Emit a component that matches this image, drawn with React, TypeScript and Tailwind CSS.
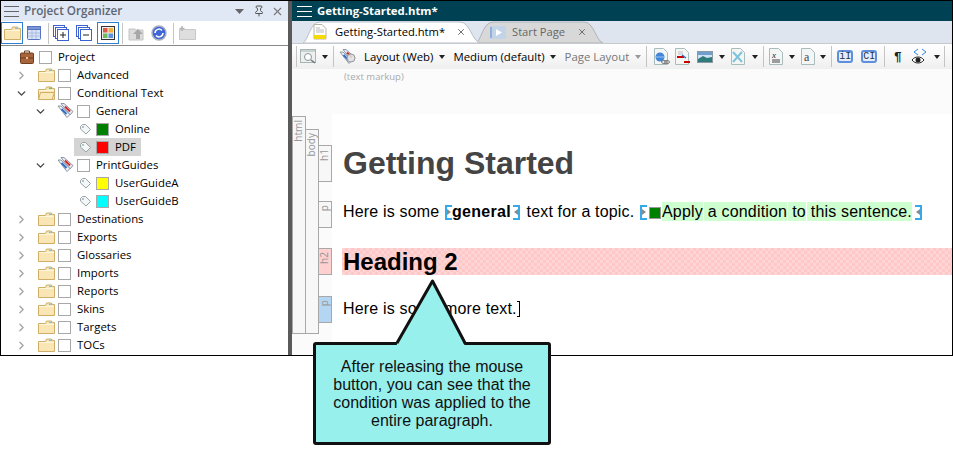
import { ChevronDown, ChevronRight, Pin, X } from 'lucide-react';
import type { ReactNode } from 'react';

const uiFont = 'font-["Open_Sans","Liberation_Sans",sans-serif]';

const Caret = ({ muted }: { muted?: boolean }) => (
  <svg width="6" height="4" viewBox="0 0 6 4" className="shrink-0">
    <path d="M0 0h6L3 4z" fill={muted ? '#999' : '#222'} />
  </svg>
);

const Sep = () => <div className="mx-[5px] h-[21px] w-px shrink-0 bg-[#c4c4c4]" />;

const Folder = ({ open }: { open?: boolean }) => (
  <svg width="17" height="14" viewBox="0 0 17 14" className="shrink-0">
    <path d="M.5 3.500h7l1-2.500h5l1 1.500h2v11H.5z" fill="#f9e6b4" stroke="#cfae68" />
    <path d="M1 4.500h15" stroke="#fff6dc" />
    {open ? <path d="M.5 13.500l2-7h14l-2.500 7z" fill="#fbe9ba" stroke="#cfae68" /> : null}
    <path d="M11 1.500h3v1.500h-3z" fill={open ? '#6cc070' : '#7fc4e0'} />
  </svg>
);

const TagGroup = ({ lens }: { lens?: boolean }) => (
  <svg width="17" height="16" viewBox="0 0 17 16" className="shrink-0">
    <path d="M4 .5h3l9 8-3 3.500z" fill="#e8ecf2" stroke="#8c96a8" />
    <path d="M8 3.500l5 5" stroke="#d22c2c" strokeWidth="2" />
    <path d="M1 3h3l9 8.500-3 3z" fill="#eef1f5" stroke="#8c96a8" />
    <path d="M4.500 6l5 5" stroke="#2f6fc6" strokeWidth="2" />
    {lens ? <circle cx="12" cy="9" r="4" fill="#e6e6e6" fillOpacity=".85" stroke="#9a9a9a" /> : null}
  </svg>
);

const Tag = () => (
  <svg width="11" height="11" viewBox="0 0 11 11" className="shrink-0">
    <path d="M.5 2.500l2-2h3l5 5-4.500 4.500-5.500-5z" fill="#f4f7f8" stroke="#97a3a6" />
    <circle cx="3" cy="3" r=".9" fill="#97a3a6" />
  </svg>
);

const Check = ({ color }: { color?: string }) => (
  <span
    className="h-[13px] w-[13px] shrink-0 border border-[#a8a8a8] bg-white"
    style={color ? { backgroundColor: color } : undefined}
  />
);

type Row = {
  label: string;
  kind: 'project' | 'folder' | 'group' | 'tag';
  arrow?: 'open' | 'closed';
  open?: boolean;
  color?: string;
  selected?: boolean;
};

const rows: Row[] = [
  { label: 'Project', kind: 'project' },
  { label: 'Advanced', kind: 'folder', arrow: 'closed' },
  { label: 'Conditional Text', kind: 'folder', arrow: 'open', open: true },
  { label: 'General', kind: 'group', arrow: 'open' },
  { label: 'Online', kind: 'tag', color: '#008000' },
  { label: 'PDF', kind: 'tag', color: '#ff0000', selected: true },
  { label: 'PrintGuides', kind: 'group', arrow: 'open' },
  { label: 'UserGuideA', kind: 'tag', color: '#ffff00' },
  { label: 'UserGuideB', kind: 'tag', color: '#00ffff' },
  { label: 'Destinations', kind: 'folder', arrow: 'closed' },
  { label: 'Exports', kind: 'folder', arrow: 'closed' },
  { label: 'Glossaries', kind: 'folder', arrow: 'closed' },
  { label: 'Imports', kind: 'folder', arrow: 'closed' },
  { label: 'Reports', kind: 'folder', arrow: 'closed' },
  { label: 'Skins', kind: 'folder', arrow: 'closed' },
  { label: 'Targets', kind: 'folder', arrow: 'closed' },
  { label: 'TOCs', kind: 'folder', arrow: 'closed' },
];

const TreeRow = ({ row }: { row: Row }) => (
  <div className="flex h-[18px] items-center">
    {row.kind === 'project' ? (
      <div className="ml-[19px] mr-[5px] flex items-center">
        <svg width="14" height="14" viewBox="0 0 14 14">
          <path d="M4.500 3V1h5v2" fill="none" stroke="#6e3f20" />
          <rect x=".5" y="3" width="13" height="10.500" rx="1" fill="#a8643a" stroke="#6e3f20" />
          <path d="M1 8h12" stroke="#6e3f20" />
          <path d="M6 7h2v2H6z" fill="#e8c68c" />
        </svg>
      </div>
    ) : null}
    {row.kind === 'folder' ? (
      <div className="ml-[14px] flex items-center">
        <div className="flex w-[23px] items-center">
          {row.arrow === 'open' ? (
            <ChevronDown size={13} strokeWidth={2.5} className="text-[#444]" />
          ) : (
            <ChevronRight size={13} strokeWidth={2.5} className="text-[#a6a6a6]" />
          )}
        </div>
        <Folder open={row.open} />
        <div className="w-[3px]" />
      </div>
    ) : null}
    {row.kind === 'group' ? (
      <div className="ml-[33px] flex items-center">
        <div className="w-[23px]">
          <ChevronDown size={13} strokeWidth={2.5} className="text-[#444]" />
        </div>
        <TagGroup />
        <div className="w-[3px]" />
      </div>
    ) : null}
    {row.kind === 'tag' ? (
      <div
        className={
          row.selected
            ? 'ml-[73px] flex h-[18px] items-center bg-[#d4d4d4] pl-[6px] pr-[5px]'
            : 'ml-[73px] flex h-[18px] items-center pl-[6px] pr-[5px]'
        }
      >
        <Tag />
        <div className="w-[5px]" />
        <Check color={row.color} />
        <span className="ml-[6px] text-[11.400px] leading-none text-black">{row.label}</span>
      </div>
    ) : (
      <>
        <Check />
        <span className="ml-[6px] text-[11.400px] leading-none text-black">{row.label}</span>
      </>
    )}
  </div>
);

const ToolBtn = ({ active, children }: { active?: boolean; children: ReactNode }) => (
  <div
    className={
      active
        ? 'flex h-[22px] w-[22px] shrink-0 items-center justify-center border border-[#2f7fd6]'
        : 'flex h-[22px] w-[22px] shrink-0 items-center justify-center border border-transparent'
    }
  >
    {children}
  </div>
);

const Stack = ({ sign }: { sign: string }) => (
  <svg width="16" height="16" viewBox="0 0 16 16">
    <rect x=".5" y=".5" width="11" height="11" fill="#fff" stroke="#3b62d0" />
    <rect x="2.500" y="2.500" width="11" height="11" fill="#fff" stroke="#3b62d0" />
    <rect x="4.500" y="4.500" width="11" height="11" fill="#fff" stroke="#3b62d0" />
    <path d={sign === '+' ? 'M7 10h6M10 7v6' : 'M7 10h6'} stroke="#222" />
  </svg>
);

const Organizer = () => (
  <div className={`flex h-full w-[287px] shrink-0 flex-col ${uiFont}`}>
    <div className="flex h-[20px] items-center bg-[#dfe8f4] pl-[3px] pr-[4px]">
      <div className="flex w-[15px] flex-col gap-[4px]">
        <div className="h-px bg-[#666]" />
        <div className="h-px bg-[#666]" />
        <div className="h-px bg-[#666]" />
      </div>
      <span className="ml-[5px] flex-1 text-[11.700px] font-semibold leading-none text-[#5f6570]">
        Project Organizer
      </span>
      <svg width="9" height="5" viewBox="0 0 9 5" className="mr-[9px]">
        <path d="M0 0h9L4.500 5z" fill="#666" />
      </svg>
      <Pin size={12} className="mr-[6px] text-[#555]" />
      <X size={13} className="text-[#777]" />
    </div>
    <div className="flex h-[25px] items-center border-b border-[#888] bg-white">
      <ToolBtn active>
        <Folder />
      </ToolBtn>
      <ToolBtn>
        <svg width="14" height="14" viewBox="0 0 14 14">
          <rect x=".5" y=".5" width="13" height="13" rx="1" fill="#dbe4f5" stroke="#5673c8" />
          <rect x=".5" y=".5" width="13" height="3" fill="#7b97d4" stroke="#5673c8" />
          <path d="M1 7h12M1 10h12M5 4v9M9 4v9" stroke="#a9bce0" />
        </svg>
      </ToolBtn>
      <div className="ml-[3px] mr-[1px] h-[21px] w-px shrink-0 bg-[#c4c4c4]" />
      <ToolBtn>
        <Stack sign="+" />
      </ToolBtn>
      <div className="w-px" />
      <ToolBtn>
        <Stack sign="-" />
      </ToolBtn>
      <div className="w-[2px]" />
      <ToolBtn active>
        <svg width="14" height="14" viewBox="0 0 14 14">
          <rect x=".5" y=".5" width="13" height="13" fill="#eee" stroke="#333" />
          <rect x="2" y="2" width="4.500" height="4.500" fill="#e0574f" />
          <rect x="7.500" y="2" width="4.500" height="4.500" fill="#f0b03a" />
          <rect x="2" y="7.500" width="4.500" height="4.500" fill="#6dbb5e" />
          <rect x="7.500" y="7.500" width="4.500" height="4.500" fill="#5b93dc" />
        </svg>
      </ToolBtn>
      <div className="ml-[3px] mr-[2px] h-[21px] w-px shrink-0 bg-[#c4c4c4]" />
      <ToolBtn>
        <svg width="17" height="15" viewBox="0 0 17 15">
          <path d="M1 3h6l1 1h7v10H1z" fill="#dcdcdc" stroke="#c4c4c4" />
          <path d="M10 3l5 5h-3v5H8V8H5z" fill="#a8a8a8" />
        </svg>
      </ToolBtn>
      <div className="w-px" />
      <ToolBtn>
        <svg width="16" height="16" viewBox="0 0 16 16">
          <circle cx="8" cy="8" r="7" fill="#3f66d6" stroke="#a9b0bf" strokeWidth="1.500" />
          <path d="M4 8a4 4 0 0 1 7-2.500M12 8a4 4 0 0 1-7 2.500" fill="none" stroke="#fff" strokeWidth="1.500" />
        </svg>
      </ToolBtn>
      <div className="ml-[3px] mr-[2px] h-[21px] w-px shrink-0 bg-[#c4c4c4]" />
      <ToolBtn>
        <svg width="17" height="14" viewBox="0 0 17 14">
          <path d="M.5 3.500h16v10H.5z" fill="#dedede" stroke="#c8c8c8" />
          <path d="M3 0v5M.5 2.500h5" stroke="#b5b5b5" strokeWidth="1.500" />
        </svg>
      </ToolBtn>
    </div>
    <div className="flex-1 overflow-hidden bg-white pt-[2px]">
      {rows.map((row) => (
        <TreeRow key={row.label} row={row} />
      ))}
    </div>
  </div>
);

const Tab = ({ active, children }: { active?: boolean; children: ReactNode }) => (
  <div className={active ? 'relative z-10 h-[22px] w-[179px]' : 'relative -ml-[6px] h-[22px] w-[129px]'}>
    <svg width="100%" height="22" viewBox={active ? '0 0 179 22' : '0 0 129 22'} className="absolute inset-0">
      {active ? (
        <path d="M1 22C6 20 8 1 18 1H158C168 1 170 20 178 22z" fill="#fff" stroke="#b9bfc9" />
      ) : (
        <path d="M1 22C6 20 8 1 18 1H109C119 1 121 20 128 22z" fill="#d8d8d8" stroke="#aeb3bb" />
      )}
    </svg>
    <div className="absolute inset-0 flex items-center">{children}</div>
  </div>
);

const Page = ({ children }: { children: ReactNode }) => (
  <svg width="16" height="17" viewBox="0 0 16 17" className="shrink-0">
    <path d="M.5.500h9l4 4v12H.5z" fill="#f4f6f6" stroke="#a9bcbc" />
    {children}
  </svg>
);

const Toolbar = () => (
  <div className={`flex h-[26px] items-center whitespace-nowrap border-t border-[#c6c9cd] bg-gradient-to-b from-white to-[#efefef] pl-[4px] text-[11.400px] text-black ${uiFont}`}>
    <div className="mr-[3px] h-[21px] w-px shrink-0 bg-[#c4c4c4]" />
    <svg width="17" height="15" viewBox="0 0 17 15" className="shrink-0">
      <rect x=".5" y=".5" width="15" height="13" fill="#eef0f0" stroke="#a9b5b5" />
      <path d="M1 1h14v2H1z" fill="#c9d2d2" />
      <circle cx="8" cy="8" r="3.500" fill="#fff" stroke="#8a9494" />
      <path d="M11 11l4 3" stroke="#6a7474" strokeWidth="1.500" />
    </svg>
    <div className="ml-[5px]"><Caret /></div>
    <Sep />
    <TagGroup lens />
    <span className="ml-[8px] leading-none">Layout (Web)</span>
    <div className="ml-[6px]"><Caret /></div>
    <span className="ml-[8px] leading-none">Medium (default)</span>
    <div className="ml-[5px]"><Caret /></div>
    <span className="ml-[9px] leading-none text-[#777]">Page Layout</span>
    <div className="ml-[6px]"><Caret muted /></div>
    <Sep />
    <div className="ml-[2px] flex items-center">
      <Page>
        <circle cx="6" cy="9" r="4.500" fill="#3f86d8" />
        <path d="M1.500 9h9" stroke="#9cc8f0" />
        <ellipse cx="10" cy="14" rx="2.500" ry="1.500" fill="none" stroke="#777" />
        <ellipse cx="13" cy="14" rx="2.500" ry="1.500" fill="none" stroke="#777" />
      </Page>
    </div>
    <div className="ml-[5px] flex items-center">
      <Page>
        <path d="M2 9h7" stroke="#c00" strokeWidth="2" />
        <path d="M9 14h6" stroke="#c00" strokeWidth="2" />
        <path d="M3 4h5M3 6h5" stroke="#bbb" />
        <path d="M7 7l4 3" stroke="#2f6fc6" strokeWidth="1.500" />
      </Page>
    </div>
    <svg width="16" height="12" viewBox="0 0 16 12" className="ml-[6px] shrink-0">
      <rect x=".5" y=".5" width="15" height="11" fill="#cfe4f2" stroke="#8a9aa0" />
      <path d="M1 8l5-3 4 2 5-1v5H1z" fill="#2f7a7a" />
      <path d="M1 1h14v3H1z" fill="#6f9fd0" />
    </svg>
    <div className="ml-[6px]"><Caret /></div>
    <div className="ml-[6px] flex items-center">
      <Page>
        <path d="M2 4l9 10M11 4l-9 10" stroke="#7cc4dc" strokeWidth="2" />
      </Page>
    </div>
    <div className="ml-[5px]"><Caret /></div>
    <Sep />
    <div className="flex items-center">
      <Page>
        <text x="3" y="10" fontSize="9" fontFamily="Liberation Serif, serif" fontStyle="italic" fill="#222">x</text>
        <path d="M3 12h8M3 14h8" stroke="#444" />
      </Page>
    </div>
    <div className="ml-[4px]"><Caret /></div>
    <div className="ml-[6px] flex items-center">
      <Page>
        <text x="3" y="13" fontSize="12" fontFamily="Liberation Serif, serif" fill="#444">a</text>
      </Page>
    </div>
    <div className="ml-[3px]"><Caret /></div>
    <Sep />
    <div className="flex h-[13px] w-[16px] shrink-0 items-center justify-center rounded-[3px] border-2 border-[#5d8fdc] bg-[#e3edfb] font-['Liberation_Mono',monospace] text-[10px] leading-none text-[#234]">iI</div>
    <div className="ml-[8px] flex h-[13px] w-[16px] shrink-0 items-center justify-center rounded-[3px] border-2 border-[#5d8fdc] bg-[#e3edfb] font-['Liberation_Mono',monospace] text-[10px] leading-none text-[#234]">CI</div>
    <div className="ml-[7px] mr-[9px] h-[21px] w-px shrink-0 bg-[#c4c4c4]" />
    <span className="w-[8px] font-['Liberation_Sans',sans-serif] text-[13px] font-bold leading-none text-[#222]">¶</span>
    <svg width="18" height="18" viewBox="0 0 18 18" className="ml-[9px] shrink-0">
      <path d="M7 7L3 4l4-3M11 1l4 3-4 3" fill="none" stroke="#2f88e0" />
      <path d="M1 12c3-4 9-4 12 0-3 4-9 4-12 0z" fill="#fff" stroke="#222" />
      <circle cx="7" cy="12" r="2.500" fill="#222" />
    </svg>
    <div className="ml-[5px]"><Caret /></div>
    <div className="ml-[4px] h-[21px] w-px shrink-0 bg-[#c4c4c4]" />
  </div>
);

const Bracket = ({ side, ml, mr }: { side: 'l' | 'r'; ml: string; mr: string }) => (
  <span
    className={
      side === 'l'
        ? `relative ${ml} ${mr} inline-block h-[15px] w-[7px] translate-y-[3px] border-y-2 border-l-2 border-[#36a9e8]`
        : `relative ${ml} ${mr} inline-block h-[15px] w-[7px] translate-y-[3px] border-y-2 border-r-2 border-[#36a9e8]`
    }
  >
    <span
      className={
        side === 'l'
          ? 'absolute left-0 top-[2px] h-0 w-0 border-y-[3px] border-l-[4px] border-y-transparent border-l-[#8a8a8a]'
          : 'absolute right-0 top-[2px] h-0 w-0 border-y-[3px] border-r-[4px] border-y-transparent border-r-[#8a8a8a]'
      }
    />
  </span>
);

const Gutter = ({ label, bg, h, mt }: { label: string; bg: string; h: string; mt: string }) => (
  <div className={`${h} ${mt} ${bg} w-[14px] border border-[#a8a8a8] text-[10px] leading-none text-[#999]`}>
    <div className="mt-[3px] flex rotate-180 justify-center [writing-mode:vertical-rl]">
      <span>{label}</span>
    </div>
  </div>
);

const Editor = () => (
  <div className="flex min-w-0 flex-1 flex-col overflow-hidden">
    <div className={`flex h-[20px] items-center bg-[#004254] pl-[5px] ${uiFont}`}>
      <div className="flex w-[15px] flex-col gap-[4px]">
        <div className="h-px bg-white" />
        <div className="h-px bg-white" />
        <div className="h-px bg-white" />
      </div>
      <span className="ml-[5px] text-[11.350px] font-bold leading-none text-white">Getting-Started.htm*</span>
    </div>
    <div className={`flex h-[22px] items-end bg-[#dfe5ef] pl-[10px] text-[11.200px] ${uiFont}`}>
      <Tab active>
        <div className="ml-[11px]">
          <svg width="14" height="16" viewBox="0 0 14 16">
            <path d="M1 .5h8l4 4V15H1z" fill="#fff" stroke="#b5b5a5" />
            <rect x="1" y="11" width="12" height="4" fill="#f5d90a" />
            <path d="M3 4h4M3 6h8M3 8h8" stroke="#b8b8b8" />
          </svg>
        </div>
        <span className="ml-[8px] leading-none text-black">Getting-Started.htm*</span>
        <X size={10} strokeWidth={2} className="ml-[11px] text-[#555]" />
      </Tab>
      <Tab>
        <div className="ml-[15px]">
          <svg width="16" height="13" viewBox="0 0 16 13">
            <rect width="16" height="13" fill="#c3d3e8" />
            <path d="M6 3l6 3.500L6 10z" fill="#fff" />
            <path d="M1 1v11" stroke="#8fb0d8" strokeWidth="2" />
          </svg>
        </div>
        <span className="ml-[6px] leading-none text-[#666]">Start Page</span>
        <X size={10} strokeWidth={2} className="ml-[12px] text-[#555]" />
      </Tab>
    </div>
    <Toolbar />
    <div className="flex min-h-0 flex-1 flex-col bg-[#fbfbfb]">
      <div className={`pl-[52px] pt-[2px] text-[9.500px] leading-[12px] text-[#aaa] ${uiFont}`}>(text markup)</div>
      <div className="mt-[31px] flex min-h-0 flex-1">
        <div className="flex shrink-0 pt-[2px]">
          <Gutter label="html" bg="bg-[#f7f7f7]" h="h-[218px]" mt="mt-[0px]" />
          <div className="-ml-px">
            <Gutter label="body" bg="bg-[#f7f7f7]" h="h-[205px]" mt="mt-[13px]" />
          </div>
          <div className="-ml-px flex flex-col">
            <Gutter label="h1" bg="bg-[#f7f7f7]" h="h-[37px]" mt="mt-[29px]" />
            <Gutter label="p" bg="bg-[#f7f7f7]" h="h-[27px]" mt="mt-[19px]" />
            <Gutter label="h2" bg="bg-[#ffd0d0]" h="h-[27px]" mt="mt-[20px]" />
            <Gutter label="p" bg="bg-[#b5d6f2]" h="h-[27px]" mt="mt-[21px]" />
          </div>
        </div>
        <div className="min-w-0 flex-1 bg-white pl-[11px] font-['Liberation_Sans',sans-serif] text-black">
          <h1 className="mt-[31px] whitespace-nowrap text-[32px] font-bold leading-[37px] text-[#444]">Getting Started</h1>
          <p className="mt-[20px] h-[26px] whitespace-nowrap text-[16px] leading-[18px] tracking-[0.17px]">
            Here is some <Bracket side="l" ml="ml-px" mr="mr-0" />
            <b className="tracking-[0.3px]">general</b>
            <Bracket side="r" ml="ml-[2px]" mr="mr-[2px]" /> text for a topic. <Bracket side="l" ml="ml-px" mr="mr-[2px]" />
            <span className="mr-px inline-block h-[12px] w-[12px] translate-y-[2px] border border-[#999] bg-[#008000]" />
            <span className="inline-block h-[19px] bg-[#ceffce] leading-[19px]">Apply</span>
            <span className="ml-px inline-block h-[19px] bg-[#ceffce] pl-[4px] leading-[19px]">a condition</span>
            <span className="ml-px inline-block h-[19px] bg-[#ceffce] pl-[4px] leading-[19px]">to</span>
            <span className="ml-px inline-block h-[19px] bg-[#ceffce] pl-[4px] leading-[19px]">this sentence.</span>
            <Bracket side="r" ml="ml-[3px]" mr="mr-0" />
          </p>
          <h2 className="-ml-px mt-[20px] h-[27px] whitespace-nowrap bg-[#ffcccc] bg-[repeating-conic-gradient(#ffc8c8_0_25%,#ffd4d4_0_50%)] bg-[length:6px_6px] pl-px text-[24px] font-bold leading-[27px]">Heading 2</h2>
          <p className="mt-[21px] whitespace-nowrap text-[16px] leading-[26px] tracking-[0.17px]">
            Here is some more text.
            <span className="inline-block h-[16px] w-[3px] translate-y-[3px] border-y border-r border-black" />
          </p>
        </div>
      </div>
    </div>
  </div>
);

export default function App() {
  return (
    <div className="relative h-[453px] w-[953px] overflow-hidden bg-white">
      <div className="flex h-[356px] border border-black">
        <Organizer />
        <div className="w-[4px] shrink-0 bg-[#5a5a5a]" />
        <Editor />
      </div>

      {/* callout */}
      <div className="absolute left-[313px] top-[342px] flex h-[103px] w-[238px] items-center justify-center rounded-[3px] border-[3px] border-[#111] bg-[#97f0ec] px-[14px] text-center font-['Liberation_Sans',sans-serif] text-[16px] leading-[18px] text-[#111]">
        After releasing the mouse button, you can see that the condition was applied to the entire paragraph.
      </div>
      <svg width="80" height="72" viewBox="0 0 80 72" className="absolute left-[393px] top-[276px]">
        <path d="M3 70L39.500 5 72 70z" fill="#97f0ec" />
        <path d="M4 67L39.500 5 72 67" fill="none" stroke="#111" strokeWidth="3" strokeLinejoin="round" />
      </svg>
    </div>
  );
}
